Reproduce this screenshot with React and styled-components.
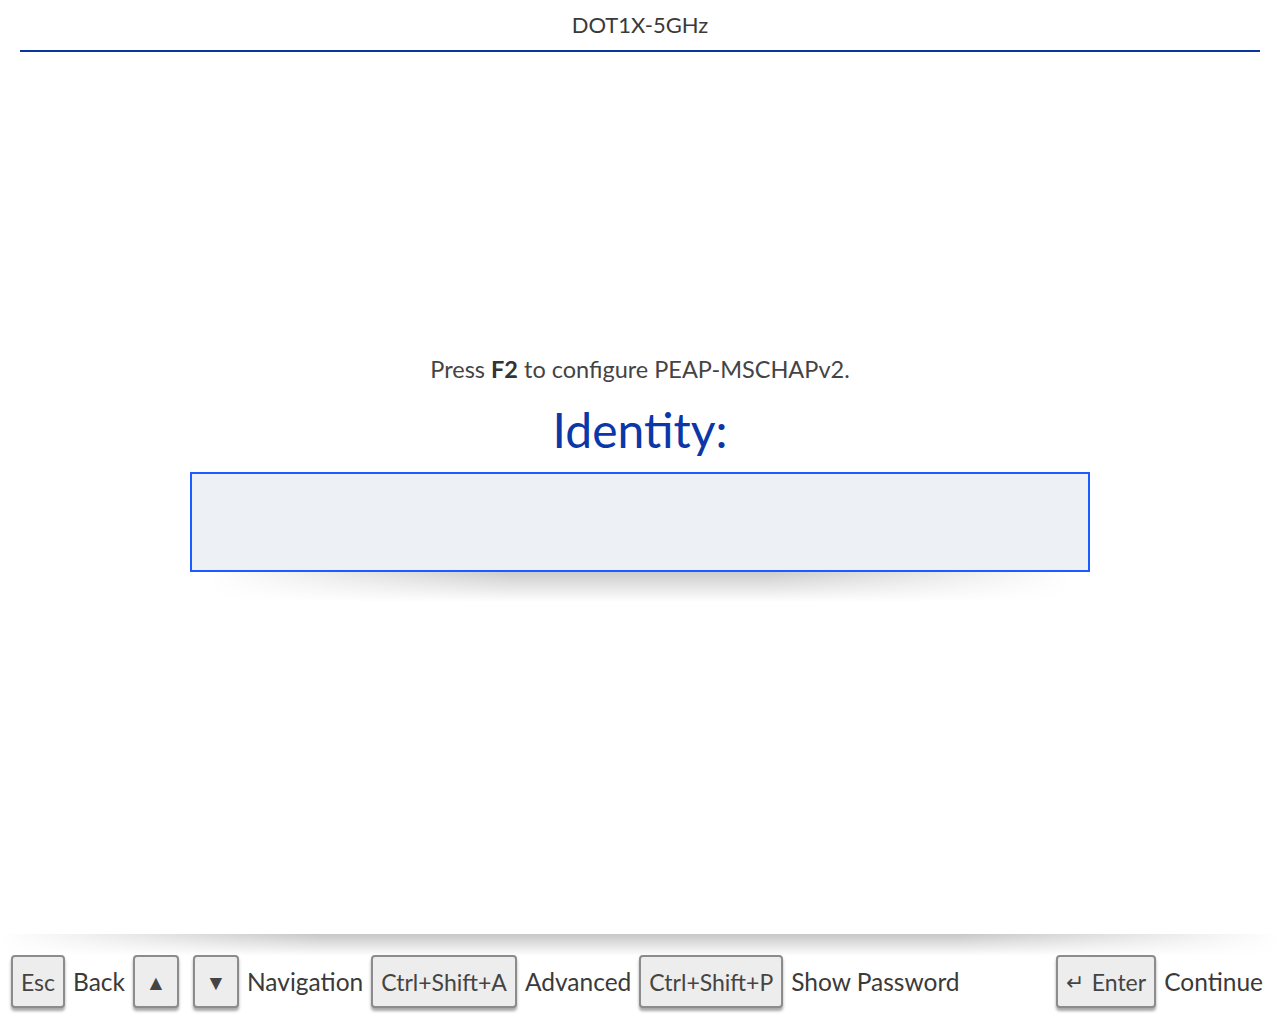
import React from 'react';
import styled, { createGlobalStyle } from 'styled-components';

const GlobalStyle = createGlobalStyle`
  html, body {
    margin: 0;
    padding: 0;
    background: #fff;
  }
  body {
    font-family: Lato, "Noto Sans", sans-serif;
    color: #3d3d3d;
  }
`;

const Page = styled.div`
  height: 100vh;
  display: flex;
  flex-direction: column;
  overflow: hidden;
`;

const Header = styled.header`
  margin: 0 20px;
  height: 50px;
  line-height: 50px;
  text-align: center;
  font-size: 22px;
  color: #3a3a3a;
  border-bottom: 2px solid #0a34a0;
`;

const Main = styled.main`
  flex: 1;
  display: flex;
  flex-direction: column;
  align-items: center;
  justify-content: center;
  padding-bottom: 60px;
`;

const Hint = styled.p`
  margin: 0 0 2px;
  font-size: 23.5px;
  line-height: 30px;
  color: #444;

  b {
    color: #333;
  }
`;

const Title = styled.h1`
  margin: 14px 0 12px;
  font-size: 48px;
  line-height: 60px;
  font-weight: 400;
  color: #0b37a8;
`;

const InputWrap = styled.div`
  position: relative;
  width: 900px;

  &::after {
    content: '';
    position: absolute;
    left: 20px;
    right: 20px;
    top: 100%;
    height: 30px;
    background: linear-gradient(to bottom, rgba(0, 0, 0, 0.2), rgba(0, 0, 0, 0));
    -webkit-mask-image: linear-gradient(to right, transparent, #000 35%, #000 65%, transparent);
    mask-image: linear-gradient(to right, transparent, #000 35%, #000 65%, transparent);
  }
`;

const Input = styled.input`
  display: block;
  box-sizing: border-box;
  width: 100%;
  height: 100px;
  margin: 0;
  border: 2px solid #1a5cff;
  background: #edf0f5;
  outline: none;
  font-family: inherit;
  font-size: 30px;
  padding: 0 16px;
`;

const Footer = styled.footer`
  position: relative;
  height: 90px;
  box-sizing: border-box;
  padding: 21px 17px 16px 11px;
  display: flex;
  align-items: flex-start;
  justify-content: space-between;

  &::before {
    content: '';
    position: absolute;
    left: 0;
    right: 0;
    top: 0;
    height: 22px;
    background: linear-gradient(to bottom, rgba(0, 0, 0, 0.22), rgba(0, 0, 0, 0));
    -webkit-mask-image: linear-gradient(to right, transparent, #000 25%, #000 75%, transparent);
    mask-image: linear-gradient(to right, transparent, #000 25%, #000 75%, transparent);
  }
`;

const Group = styled.div`
  display: flex;
  align-items: center;
`;

const Key = styled.kbd`
  box-sizing: border-box;
  min-width: ${p => p.$min || 0}px;
  height: 53px;
  padding: 0 8px;
  margin-right: ${p => p.$after ?? 8}px;
  display: inline-flex;
  align-items: center;
  justify-content: center;
  font-family: inherit;
  font-size: ${p => p.$size || 23}px;
  color: #444;
  background: #ededed;
  border: 2px solid #8c8c8c;
  border-radius: 4px;
  box-shadow: 0 3px 3px rgba(0, 0, 0, 0.35);
`;

const Label = styled.span`
  font-size: 24.5px;
  color: #3a3a3a;
  margin-right: ${p => p.$after ?? 8}px;
`;

const Arrow = styled.span`
  font-size: 22px;
  margin-right: 8px;
`;

export default function App() {
  return (
    <Page>
      <GlobalStyle />
      <Header>DOT1X-5GHz</Header>
      <Main>
        <Hint>
          Press <b>F2</b> to configure PEAP-MSCHAPv2.
        </Hint>
        <Title>Identity:</Title>
        <InputWrap>
          <Input type="text" aria-label="Identity" />
        </InputWrap>
      </Main>
      <Footer>
        <Group>
          <Key>Esc</Key>
          <Label>Back</Label>
          <Key $min={46} $size={21} $after={14}>▲</Key>
          <Key $min={46} $size={21}>▼</Key>
          <Label>Navigation</Label>
          <Key>Ctrl+Shift+A</Key>
          <Label>Advanced</Label>
          <Key>Ctrl+Shift+P</Key>
          <Label>Show Password</Label>
        </Group>
        <Group>
          <Key><Arrow>↵</Arrow>Enter</Key>
          <Label $after={0}>Continue</Label>
        </Group>
      </Footer>
    </Page>
  );
}
